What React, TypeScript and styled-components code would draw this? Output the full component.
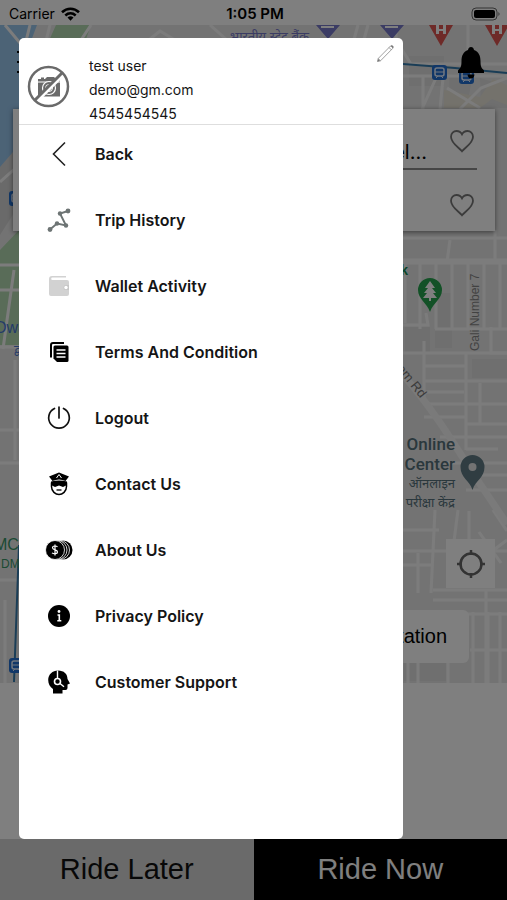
import React from "react";
import styled, { createGlobalStyle } from "styled-components";

const GlobalStyle = createGlobalStyle`
  * { box-sizing: border-box; }
  body { margin: 0; background: #fff; font-family: Inter, "Liberation Sans", sans-serif; }
  button { font: inherit; color: inherit; border: 0; margin: 0; padding: 0; background: none; cursor: pointer; }
`;

const Screen = styled.div`
  position: relative;
  display: flex;
  flex-direction: column;
  min-height: 100vh;
  overflow: hidden;
  background: #fff;
`;

const StatusBar = styled.header`
  display: grid;
  grid-template-columns: 1fr auto 1fr;
  align-items: center;
  height: 25px;
  padding: 2px 6px 0 9px;
  font-size: 14px;
`;

const Carrier = styled.span`
  display: flex;
  align-items: center;
  gap: 6px;
`;

const Clock = styled.span`
  font-size: 15px;
  font-weight: 600;
`;

const BatteryIcon = styled.svg`
  justify-self: end;
`;

const MapArea = styled.main`
  position: relative;
  isolation: isolate;
  display: flex;
  flex-direction: column;
  height: 658px;
  padding: 18px 12px 20px 13px;
`;

const MapDrawing = styled.svg`
  position: absolute;
  inset: 0;
  z-index: -1;
  width: 100%;
  height: 100%;
  font-family: "Liberation Sans", "Noto Sans", sans-serif;
`;

const TopBar = styled.div`
  display: flex;
  justify-content: space-between;
  align-items: center;
  height: 38px;
  padding: 0 10px 0 4px;
`;

const IconButton = styled.button`
  display: flex;
  align-items: center;
  justify-content: center;
`;

const TripCard = styled.section`
  margin-top: 28px;
  padding: 0 18px;
  background: #fff;
  box-shadow: 0 1px 5px rgba(0, 0, 0, 0.5);
`;

const TripRow = styled.div<{ $divided?: boolean }>`
  display: flex;
  justify-content: flex-end;
  align-items: center;
  gap: 22px;
  height: 61px;
  padding: ${(p) => (p.$divided ? "4px 2px 0 0" : "8px 2px 0 0")};
  border-bottom: ${(p) => (p.$divided ? "2px solid #8c8c8c" : "0")};
`;

const Address = styled.span`
  padding-top: 22px;
  font-size: 20px;
`;

const MapControls = styled.div`
  display: flex;
  flex-direction: column;
  align-items: flex-end;
  gap: 22px;
  margin-top: auto;
`;

const LocateButton = styled(IconButton)`
  width: 49px;
  height: 49px;
  background: #fff;
`;

const StationButton = styled.button`
  height: 53px;
  margin-right: 26px;
  padding: 0 22px;
  border-radius: 6px;
  background: #fff;
  font-family: "Liberation Sans", sans-serif;
  font-size: 20px;
`;

const RideBar = styled.footer`
  display: grid;
  grid-template-columns: 1fr 1fr;
  height: 61px;
  margin-top: auto;
`;

const RideButton = styled.button<{ $dark?: boolean }>`
  background: ${(p) => (p.$dark ? "#000" : "#d4d4d4")};
  color: ${(p) => (p.$dark ? "#fff" : "#111")};
  font-family: "Liberation Sans", sans-serif;
  font-size: 29px;
`;

const Backdrop = styled.div`
  position: absolute;
  inset: 0;
  display: flex;
  padding: 38px 104px 61px 19px;
  background: rgba(0, 0, 0, 0.5);
`;

const Drawer = styled.aside`
  flex: 1;
  border-radius: 5px;
  background: #fff;
  color: #151515;
`;

const Profile = styled.div`
  display: flex;
  padding: 16px 8px 0;
  border-bottom: 1px solid #dedede;
`;

const Avatar = styled.svg`
  flex: none;
  margin: 11px 19px 0 0;
`;

const Details = styled.div`
  display: flex;
  flex: 1;
  flex-direction: column;
  gap: 1px;
  height: 70px;
  font-size: 14px;
  line-height: 23px;
`;

const EditButton = styled(IconButton)`
  align-self: flex-start;
  margin-top: -10px;
`;

const Menu = styled.nav`
  display: flex;
  flex-direction: column;
  gap: 8px;
`;

const MenuItem = styled.button`
  display: flex;
  align-items: center;
  gap: 22px;
  height: 58px;
  padding: 0 26px;
  font-size: 16px;
  font-weight: 600;
  text-align: left;
`;

const MenuIcon = styled.svg`
  flex: none;
  width: 28px;
  height: 28px;
  overflow: visible;
`;

const menu: { label: string; icon: React.ReactNode }[] = [
  {
    label: "Back",
    icon: <path d="M20 2.500 8.500 14 20 25.500" fill="none" stroke="#222" strokeWidth="1.600" />,
  },
  {
    label: "Trip History",
    icon: (
      <g fill="#6d7474">
        <path d="M5 23.500 12 17.500l9 2-6-12 8-2.500" fill="none" stroke="#6d7474" strokeWidth="1.900" />
        <circle cx="5" cy="23.500" r="2.400" />
        <circle cx="12" cy="17.500" r="2.200" />
        <circle cx="21" cy="19.500" r="2.200" />
        <circle cx="15" cy="7.500" r="2.200" />
        <circle cx="23" cy="5" r="2.400" />
      </g>
    ),
  },
  {
    label: "Wallet Activity",
    icon: (
      <g>
        <path
          d="M4 7a3 3 0 0 1 3-3h14v1.400H7.500a1.300 1.300 0 0 0 0 2.600H22a2 2 0 0 1 2 2v12a2 2 0 0 1-2 2H6a2 2 0 0 1-2-2Z"
          fill="#d2d2d2"
        />
        <path d="M24 13h-3a2 2 0 0 0 0 5h3Z" fill="#c6c6c6" />
        <circle cx="21" cy="15.500" r="1.700" fill="#fff" />
      </g>
    ),
  },
  {
    label: "Terms And Condition",
    icon: (
      <g>
        <path d="M6 19.500V7a2 2 0 0 1 2-2h11" fill="none" stroke="#000" strokeWidth="2" />
        <path d="M10 7.500h12A1.500 1.500 0 0 1 23.500 9v13.500A1.500 1.500 0 0 1 22 24H12l-3.500-3.500V9A1.500 1.500 0 0 1 10 7.500Z" fill="#000" />
        <path d="M11.500 12h9M11.500 15.500h9M11.500 19h9" stroke="#fff" strokeWidth="1.300" />
      </g>
    ),
  },
  {
    label: "Logout",
    icon: (
      <path
        d="M14 3v11M9.500 4.500a10.300 10.300 0 1 0 9 0"
        fill="none"
        stroke="#111"
        strokeWidth="1.700"
        strokeLinecap="round"
      />
    ),
  },
  {
    label: "Contact Us",
    icon: (
      <g>
        <path d="M14 2.500 24 6.500 20.500 11Q14 8 7.500 11L4 6.500Z" fill="#000" />
        <path d="m11.500 8 2.500-3.500L16.500 8" fill="none" stroke="#fff" strokeWidth="1" />
        <path d="M6.500 12.500v4c0 5 4 8 7.500 8s7.500-3 7.500-8v-4" fill="#fff" stroke="#000" strokeWidth="1.500" />
        <path d="M6 11.500q8-2 16 0V15l-4 2-4-1.500-4 1.500-4-2Z" fill="#000" />
        <path d="M11.500 20h5" fill="none" stroke="#000" strokeWidth="1.300" />
      </g>
    ),
  },
  {
    label: "About Us",
    icon: (
      <g>
        <circle cx="18" cy="14" r="9.500" fill="#000" />
        <circle cx="15" cy="14" r="9.500" fill="#000" stroke="#fff" strokeWidth=".8" />
        <circle cx="12.500" cy="14" r="9.500" fill="#000" stroke="#fff" strokeWidth=".8" />
        <circle cx="10" cy="14" r="9.500" fill="#000" stroke="#fff" strokeWidth=".8" />
        <path
          d="M12.500 10.800c-1-1-5-1.500-5 1 0 2.600 5 1.500 5 4.100 0 2.300-4 2.200-5.500 1M10 8.500v11"
          fill="none"
          stroke="#fff"
          strokeWidth="1.200"
        />
      </g>
    ),
  },
  {
    label: "Privacy Policy",
    icon: (
      <g>
        <circle cx="14" cy="14" r="11" fill="#000" />
        <circle cx="14" cy="9.500" r="1.400" fill="#fff" />
        <path d="M12.500 13h1.800v6M12.300 18.800h4" fill="none" stroke="#fff" strokeWidth="1.600" />
      </g>
    ),
  },
  {
    label: "Customer Support",
    icon: (
      <g>
        <path
          d="M13 2.500c6 0 9.500 3.500 9.500 8.500l2.500 4.500-2.500 1V20a2 2 0 0 1-2 2h-3v3.500H8V21c-3-2-4.800-5-4.800-9C3.200 6.500 7.500 2.500 13 2.500Z"
          fill="#000"
        />
        <path d="M12.500 2.500v8M15 15.500l4 3.300" fill="none" stroke="#fff" strokeWidth="1.400" />
        <circle cx="12.500" cy="13.500" r="3" fill="#000" stroke="#fff" strokeWidth="1.600" />
      </g>
    ),
  },
];

function Heart() {
  return (
    <svg width="26" height="24" viewBox="0 0 26 24" aria-hidden="true">
      <path
        d="M13 22.300C10.500 19 2 14.500 2 7.800 2 4.500 4.500 2 7.500 2c2.600 0 4.500 1.300 5.500 3.300C14 3.300 15.900 2 18.500 2c3 0 5.500 2.500 5.500 5.800 0 6.700-8.500 11.200-11 14.500Z"
        fill="none"
        stroke="#777"
        strokeWidth="1.800"
      />
    </svg>
  );
}

function TransitStop({ x, y }: { x: number; y: number }) {
  return (
    <g transform={`translate(${x} ${y})`}>
      <rect width="15" height="15" rx="3" fill="#236fd0" />
      <rect x="3" y="3" width="9" height="8" rx="2" fill="none" stroke="#e4efff" strokeWidth="1.500" />
      <path d="M3 7h9M4 13l2-2M11 13l-2-2" stroke="#e4efff" />
    </g>
  );
}

function CityMap() {
  return (
    <MapDrawing viewBox="0 25 507 658" preserveAspectRatio="xMidYMin slice" aria-hidden="true">
      <rect y="25" width="507" height="658" fill="#e7e7e7" />
      <path d="M0 25h37l-15 40-2 100L0 167Z" fill="#98c6ed" />
      <path d="M56 25h35l-7 20H47ZM0 250l19-20v115H0Z" fill="#b3d9b1" />
      <path d="M0 167 19 145v60L0 235Z" fill="#d5d5d5" />
      <g fill="#dedede">
        <path d="M409 56h35v30h-35ZM449 75l25-4-7 33h-17ZM480 78l27 8v22h-26Z" />
        <path d="M405 327h25v25h-25ZM435 293h17v55h-17ZM472 359h35v19h-35ZM404 650h42v31h-42Z" />
      </g>
      <path d="M444 90 480 97l13-18 14 6v20l-15-6-12 9h-36Z" fill="#e9e5d8" />
      <g fill="none" stroke="#f9f9f9" strokeWidth="3">
        <path d="M5 25 20 43M30 25l-5 20M50 25l-5 20M91 25l-12 18M145 43l15-12 20 12M210 25l18 16M358 25l-5 18M368 25l-5 18M396 25v15l15 24h96M468 25v40M403 76h104M423 77v32M436 78l-14 31M443 78l-3 31M447 88l33 20M507 78l-26 10-21 21" />
        <path d="M0 182 19 165M0 265h19M0 290h19M14 270 3 349M0 347h19M15 360v100M0 430h19M0 463h19M0 580h19M5 600v83" />
        <path d="M403 238h104M403 260h104M450 240l-3 22M495 230v30M403 263h104M405 264v59M420 264v65M436 264v65M452 264v65M468 264v65M484 264v65M500 264v65M403 325h25l-2-12M435 329h72M491 327v26h16" />
        <path d="M403 353h104M424 341v60M466 353v97M424 366h41M424 381h83M424 392h40M428 404h38M466 404h41M424 417h42M466 424h41M480 383v40M466 437h41M440 417h26M440 437h26M466 449h32M446 463h61M466 475h41M466 490h41" />
        <path d="M403 530h36M403 551h104M435 510l-4 83M458 510l-9 70M403 565h30M418 553v40M433 590h74M433 600h74M469 511v70M479 532l22 31M493 510l14 21M486 590v93M403 614h104M473 612v71M488 612v71M500 612v71M408 662v21M418 662v21M448 662v21M470 650h37M403 650h50M507 540l-20 15" />
      </g>
      <path d="M403 375c26 29 47 62 69 97l35 52" fill="none" stroke="#f5f5f5" strokeWidth="7" />
      <path d="M403 64 455 68l52 5M19 545 14 682" fill="none" stroke="#347bad" strokeWidth="2" />
      <TransitStop x={432} y={65} />
      <TransitStop x={459} y={69} />
      <TransitStop x={9} y={191} />
      <TransitStop x={9} y={658} />
      <g fill="#7678c8">
        <path d="M316 25h24l-12 14ZM380 25h24l-12 14Z" />
        <path d="M321 27h13M385 27h13" stroke="#fff" strokeWidth="2" />
      </g>
      <g fill="#dd5550">
        <path d="M429 25h24l-12 21ZM485 25h24l-12 21Z" />
      </g>
      <path d="M436 25h3v4h4v-4h3v9h-3v-3h-4v3h-3ZM492 25h3v4h4v-4h3v9h-3v-3h-4v3h-3Z" fill="#fff" />
      <text x="230" y="41" fontSize="13" fill="#7678c8">भारतीय स्टेट बैंक</text>
      <text x="-5" y="333" fontSize="16" fill="#4876d0">Dwarka</text>
      <text x="14" y="354" fontSize="12" fill="#4876d0">द्वारका</text>
      <text x="-6" y="550" fontSize="16" fill="#389566">MCD</text>
      <text x="1" y="568" fontSize="12" fill="#389566">DMC</text>
      <text x="408" y="275" textAnchor="end" fontSize="14" fontWeight="700" fill="#188d52">Park</text>
      <path d="M430 312c-3-9-12-13-12-22a12 12 0 0 1 24 0c0 9-9 13-12 22Z" fill="#26a34e" />
      <path d="m430 281-5 7h3l-4 5h3l-4 5h6v3h2v-3h6l-4-5h3l-4-5h3Z" fill="#fff" />
      <text transform="translate(479 351) rotate(-90)" fontSize="12" fill="#858585">Gali Number 7</text>
      <text transform="translate(386 356) rotate(51)" fontSize="13" fill="#777">Uttam Rd</text>
      <g textAnchor="end" fill="#55707a">
        <text x="455" y="450" fontSize="17" fontWeight="500" fontFamily="Roboto">Online</text>
        <text x="455" y="470" fontSize="17" fontWeight="500" fontFamily="Roboto">Center</text>
        <text x="455" y="488" fontSize="13">ऑनलाइन</text>
        <text x="455" y="507" fontSize="13">परीक्षा केंद्र</text>
      </g>
      <path d="M472.500 490c-3-10-12-12-12-23a12 12 0 0 1 24 0c0 11-9 13-12 23Z" fill="#607b85" />
      <circle cx="472.500" cy="467" r="4" fill="#e6e6e6" />
    </MapDrawing>
  );
}

export default function App() {
  return (
    <>
      <GlobalStyle />
      <Screen>
        <StatusBar>
          <Carrier>
            Carrier
            <svg width="19" height="14" viewBox="0 0 19 14" aria-label="Wi-Fi">
              <g fill="none" stroke="#000" strokeWidth="2.600">
                <path d="M1 5.200c5-4.600 12-4.600 17 0" />
                <path d="M4.300 8.400c3.100-2.700 7.300-2.700 10.400 0" />
              </g>
              <path d="M6.500 10.500q3-2.300 6 0l-3 3.200Z" />
            </svg>
          </Carrier>
          <Clock>1:05 PM</Clock>
          <BatteryIcon width="30" height="14" viewBox="0 0 30 14" aria-label="Battery">
            <rect x="1" y="1" width="25" height="12" rx="4" fill="none" stroke="#666" />
            <rect x="3" y="3" width="21" height="8" rx="2" />
            <path d="M27.500 5q2 2 0 4Z" fill="#555" />
          </BatteryIcon>
        </StatusBar>

        <MapArea>
          <CityMap />
          <TopBar>
            <IconButton aria-label="Menu">
              <svg width="24" height="24" viewBox="0 0 24 24" aria-hidden="true">
                <path d="M0 2h24M0 12h24M0 22h24" stroke="#000" strokeWidth="2" />
              </svg>
            </IconButton>
            <IconButton aria-label="Notifications">
              <svg width="28" height="33" viewBox="0 0 28 33" aria-hidden="true">
                <path d="M14 1q2.500 0 3 3c5 2 6.500 6 6.500 11 0 6 1 7 3.500 9.500V27H1v-2.500C3.500 22 4.500 21 4.500 15c0-5 1.500-9 6.500-11q.5-3 3-3ZM10.500 28.500h7q-.5 4-3.500 4t-3.500-4Z" />
              </svg>
            </IconButton>
          </TopBar>
          <TripCard>
            <TripRow $divided>
              <Address>Pickup near hotel...</Address>
              <IconButton aria-label="Save pickup">
                <Heart />
              </IconButton>
            </TripRow>
            <TripRow>
              <IconButton aria-label="Save destination">
                <Heart />
              </IconButton>
            </TripRow>
          </TripCard>
          <MapControls>
            <LocateButton aria-label="Current location">
              <svg width="28" height="28" viewBox="0 0 28 28" aria-hidden="true">
                <g fill="none" stroke="#666" strokeWidth="2.500">
                  <circle cx="14" cy="14" r="10.500" />
                  <path d="M14 0v5M14 23v5M0 14h5M23 14h5" />
                </g>
              </svg>
            </LocateButton>
            <StationButton>Station</StationButton>
          </MapControls>
        </MapArea>

        <RideBar>
          <RideButton>Ride Later</RideButton>
          <RideButton $dark>Ride Now</RideButton>
        </RideBar>

        <Backdrop>
          <Drawer>
            <Profile>
              <Avatar width="43" height="43" viewBox="0 0 43 43" aria-label="No photo">
                <path d="M11 14h3v-1.500h3V14h1l2-2h7l2 2h4v17.500H11Z" fill="#6a6a6a" />
                <path d="M11 17h22" stroke="#fff" />
                <circle cx="22" cy="23" r="6.500" fill="#6a6a6a" stroke="#fff" strokeWidth="1.200" />
                <circle cx="22" cy="23" r="3.500" fill="none" stroke="#fff" />
                <path d="M9.500 36 37.500 8" stroke="#fff" strokeWidth="4" />
                <path d="M7.500 35.500 35.500 7.500" stroke="#6a6a6a" strokeWidth="3" />
                <circle cx="21.500" cy="21.500" r="19.500" fill="none" stroke="#6a6a6a" strokeWidth="2.500" />
              </Avatar>
              <Details>
                <div>test user</div>
                <div>demo@gm.com</div>
                <div>4545454545</div>
              </Details>
              <EditButton aria-label="Edit profile">
                <svg width="19" height="19" viewBox="0 0 19 19" aria-hidden="true">
                  <path d="M1.500 17.500 2.200 14.500 14.500 2q1.300-1 2.300 0t0 2.300L4.500 16.800ZM13 3.500l2.300 2.300M2.200 14.500l2.300 2.300" fill="#fff" stroke="#888" strokeWidth=".8" />
                  <path d="m1.500 17.500.7-2.500 1.800 1.800ZM14.500 2q1.300-1 2.300 0t0 2.300Z" fill="#777" />
                </svg>
              </EditButton>
            </Profile>
            <Menu aria-label="Account menu">
              {menu.map(({ label, icon }) => (
                <MenuItem key={label}>
                  <MenuIcon viewBox="0 0 28 28" aria-hidden="true">
                    {icon}
                  </MenuIcon>
                  {label}
                </MenuItem>
              ))}
            </Menu>
          </Drawer>
        </Backdrop>
      </Screen>
    </>
  );
}
